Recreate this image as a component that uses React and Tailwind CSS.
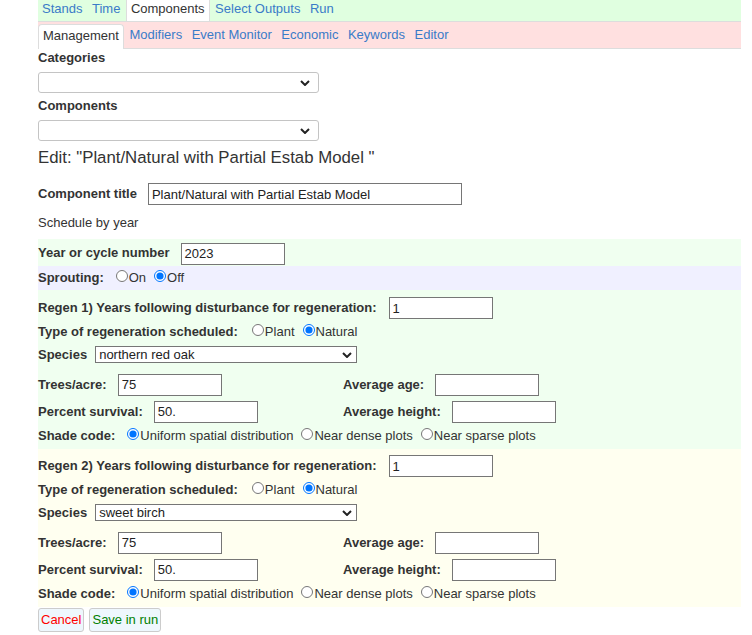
import React from "react";

const link = "text-[#3a7bc8]";

function Chevron() {
  return (
    <svg width="10" height="6" viewBox="0 0 10 6" className="shrink-0">
      <polyline points="1,1 5,5 9,1" fill="none" stroke="#222" strokeWidth="2" />
    </svg>
  );
}

function TextBox({ value, w = "w-[104px]" }) {
  return (
    <div className={`${w} h-[22px] border border-[#767676] bg-white flex items-center px-[3px] text-[13px] text-[#222] leading-none`}>
      {value}
    </div>
  );
}

function Radio({ checked, label }) {
  return (
    <label className="flex items-center">
      <input
        type="radio"
        defaultChecked={checked}
        className="m-0 mr-[1px] ml-[8px] w-[12px] h-[12px] relative top-[-2px] accent-[#0075ff]"
      />
      <span>{label}</span>
    </label>
  );
}

function Species({ value }) {
  return (
    <div className="w-[262px] h-[17px] border border-[#767676] bg-white flex items-center justify-between pl-[3px] pr-[4px] text-[13px] font-normal text-[#222] leading-none">
      <span>{value}</span>
      <Chevron />
    </div>
  );
}

function Regen({ n, species, bg, pt, pb }) {
  return (
    <div className={`${bg} ${pt} ${pb} text-[13px] text-[#333]`}>
      <div className="h-[24px] flex items-center font-bold">
        <span>Regen {n}) Years following disturbance for regeneration:</span>
        <div className="ml-[12px] font-normal"><TextBox value="1" /></div>
      </div>
      <div className="h-[23px] flex items-center">
        <span className="font-bold mr-[6px]">Type of regeneration scheduled:</span>
        <Radio label="Plant" />
        <Radio checked label="Natural" />
      </div>
      <div className="h-[23px] flex items-center">
        <span className="font-bold mr-[8px]">Species</span>
        <Species value={species} />
      </div>
      <div className="mt-[5px] grid grid-cols-[305px_1fr]">
        <div className="h-[27px] flex items-center">
          <span className="font-bold">Trees/acre:</span>
          <div className="ml-[11px]"><TextBox value="75" /></div>
        </div>
        <div className="h-[27px] flex items-center">
          <span className="font-bold">Average age:</span>
          <div className="ml-[11px]"><TextBox value="" /></div>
        </div>
        <div className="h-[27px] flex items-center">
          <span className="font-bold">Percent survival:</span>
          <div className="ml-[11px]"><TextBox value="50." /></div>
        </div>
        <div className="h-[27px] flex items-center">
          <span className="font-bold">Average height:</span>
          <div className="ml-[11px]"><TextBox value="" /></div>
        </div>
      </div>
      <div className="h-[21px] flex items-center">
        <span className="font-bold mr-[4px]">Shade code:</span>
        <Radio checked label="Uniform spatial distribution" />
        <Radio label="Near dense plots" />
        <Radio label="Near sparse plots" />
      </div>
    </div>
  );
}

export default function App() {
  return (
    <div className="bg-white min-h-[635px] font-['Liberation_Sans',Arial,sans-serif] text-[13px] text-[#333]">
      <div className="ml-[38px] w-[703px]">
        {/* top tabs */}
        <div className="h-[22px] bg-[#e0ffe0] border-b border-[#dddddd] flex gap-[1.5px] text-[13px]">
          <span className={`px-[4px] h-[21px] pb-[3px] flex items-center ${link}`}>Stands</span>
          <span className={`px-[4px] h-[21px] pb-[3px] flex items-center ${link}`}>Time</span>
          <span className="px-[4px] h-[21px] pb-[3px] flex items-center bg-white border-x border-[#dddddd] text-[#333]">Components</span>
          <span className={`px-[4px] h-[21px] pb-[3px] flex items-center ${link}`}>Select Outputs</span>
          <span className={`px-[4px] h-[21px] pb-[3px] flex items-center ${link}`}>Run</span>
        </div>
        <div className="h-[27px] bg-[#ffe0e0] border-b border-[#dddddd] flex items-end gap-[1.5px] text-[13px]">
          <span className="px-[4px] h-[25px] pb-[2px] flex items-center bg-white border-t border-x border-[#dddddd] rounded-t-[4px] text-[#333] relative top-[1px]">Management</span>
          <span className={`px-[4px] h-[25px] pb-[1px] flex items-center ${link}`}>Modifiers</span>
          <span className={`px-[4px] h-[25px] pb-[1px] flex items-center ${link}`}>Event Monitor</span>
          <span className={`px-[4px] h-[25px] pb-[1px] flex items-center ${link}`}>Economic</span>
          <span className={`px-[4px] h-[25px] pb-[1px] flex items-center ${link}`}>Keywords</span>
          <span className={`px-[4px] h-[25px] pb-[1px] flex items-center ${link}`}>Editor</span>
        </div>

        <div className="h-[16px] mt-[1px] flex items-center font-bold">Categories</div>
        <div className="mt-[6px] w-[281px] h-[21px] border border-[#c4c4c4] rounded-[3px] bg-white flex items-center justify-end pr-[8px]">
          <Chevron />
        </div>
        <div className="h-[16px] mt-[5px] flex items-center font-bold">Components</div>
        <div className="mt-[6px] w-[281px] h-[21px] border border-[#c4c4c4] rounded-[3px] bg-white flex items-center justify-end pr-[8px]">
          <Chevron />
        </div>
        <div className="mt-[8px] h-[18px] flex items-center text-[16.8px] text-[#333]">
          Edit: "Plant/Natural with Partial Estab Model "
        </div>

        <div className="mt-[16px] flex items-center">
          <span className="font-bold">Component title</span>
          <div className="ml-[11px]">
            <TextBox w="w-[314px]" value="Plant/Natural with Partial Estab Model" />
          </div>
        </div>
        <div className="mt-[9px] h-[17px] flex items-center text-[13px]">Schedule by year</div>

        <div className="mt-[8px] bg-[#f0fff0] h-[27px] flex items-center">
          <span className="font-bold">Year or cycle number</span>
          <div className="ml-[11px] mt-[2px]"><TextBox value="2023" /></div>
        </div>
        <div className="bg-[#f0f0ff] h-[24px] flex items-center">
          <span className="font-bold mr-[4px]">Sprouting:</span>
          <Radio label="On" />
          <Radio checked label="Off" />
        </div>

        <Regen n={1} species="northern red oak" bg="bg-[#f0fff0]" pt="pt-[6px]" pb="pb-[3px]" />
        <Regen n={2} species="sweet birch" bg="bg-[#fffff0]" pt="pt-[5px]" pb="pb-[3px]" />

        <div className="mt-[1px] flex gap-[5px]">
          <button className="h-[24px] px-[2px] border border-[#cccccc] rounded-[3px] bg-[#eef7fd] text-[#ff0000] text-[13px]">Cancel</button>
          <button className="h-[24px] px-[2px] border border-[#cccccc] rounded-[3px] bg-[#eef7fd] text-[#008000] text-[13px]">Save in run</button>
        </div>
      </div>
    </div>
  );
}
